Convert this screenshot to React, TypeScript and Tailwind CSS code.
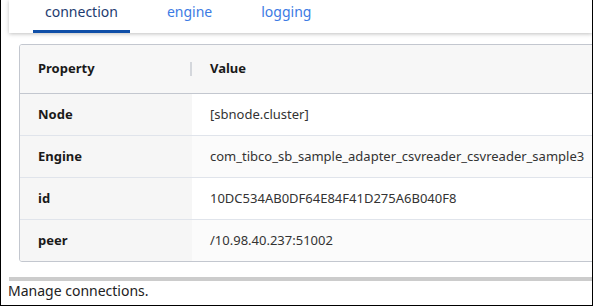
import React from "react";

const rows = [
  { name: "Node", value: "[sbnode.cluster]" },
  { name: "Engine", value: "com_tibco_sb_sample_adapter_csvreader_csvreader_sample3" },
  { name: "id", value: "10DC534AB0DF64E84F41D275A6B040F8" },
  { name: "peer", value: "/10.98.40.237:51002" },
];

const tabs = ["connection", "engine", "logging"];

const App: React.FC = () => {
  return (
    <div
      className="w-[593px] h-[306px] bg-white border-x border-b border-black overflow-hidden flex flex-col"
      style={{ fontFamily: '"Noto Sans", "Open Sans", sans-serif' }}
    >
      <div className="pl-2 flex flex-col flex-1">
        <div className="h-[33px] bg-white shadow-[0_1px_4px_rgba(0,0,0,0.25)] flex items-stretch pl-6 gap-[25px] relative z-10">
          {tabs.map((t, i) => (
            <div
              key={t}
              className={
                i === 0
                  ? "px-3 flex items-start pt-[1px] text-[14px] leading-[22px] text-[#1d3b6f] border-b-[3px] border-[#0f4fa8]"
                  : "px-3 flex items-start pt-[1px] text-[14px] leading-[22px] text-[#3c7be4] border-b-[3px] border-transparent"
              }
            >
              {t}
            </div>
          ))}
        </div>

        <div className="ml-[10px] mt-[11px] w-[620px] border border-[#c3c7cf] rounded-[3px] overflow-hidden text-[13px]">
          <div className="h-[49px] bg-[#f7f7f7] border-b border-[#c3c7cf] flex items-center font-bold text-[#1a1a1a]">
            <div className="w-[172px] pl-[18px] relative h-full flex items-center">
              Property
              <span className="absolute right-0 top-[17px] h-[14px] w-[2px] bg-[#d4d7dc]" />
            </div>
            <div className="pl-[18px]">Value</div>
          </div>
          {rows.map((r, i) => (
            <div
              key={r.name}
              className={
                i < rows.length - 1
                  ? "h-[42px] flex border-b border-[#e0e4eb]"
                  : "h-[41px] flex"
              }
            >
              <div className="w-[172px] pl-[18px] bg-[#f6f6f6] flex items-center font-bold text-[#1a1a1a]">
                {r.name}
              </div>
              <div
                className={
                  i % 2 === 1
                    ? "flex-1 pl-[18px] flex items-center text-[#333333] bg-[#fbfbfb]"
                    : "flex-1 pl-[18px] flex items-center text-[#333333] bg-white"
                }
              >
                {r.value}
              </div>
            </div>
          ))}
        </div>

        <div className="mt-[15px] h-[4px] bg-[#cccccc]" />
        <div className="text-[14px] text-[#222222] leading-[19px] -ml-[1px]">Manage connections.</div>
      </div>
    </div>
  );
};

export default App;
